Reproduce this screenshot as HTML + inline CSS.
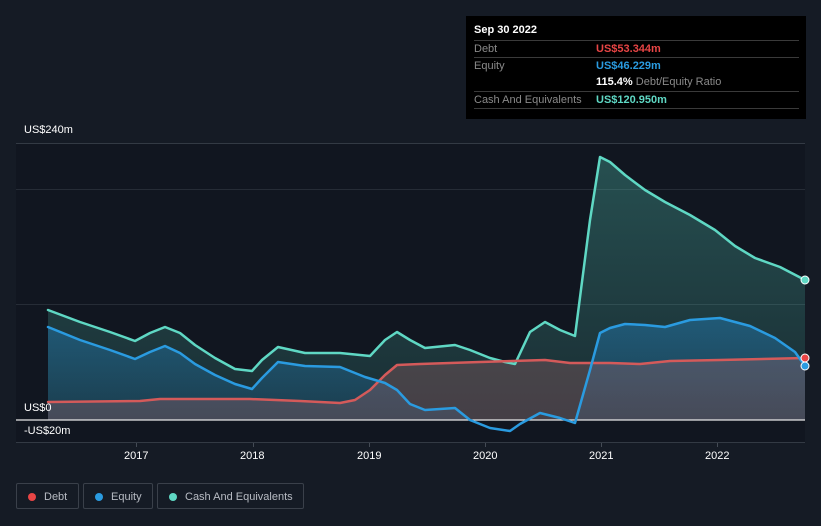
<!DOCTYPE html>
<html><head><meta charset="utf-8"><style>
body{margin:0;width:821px;height:526px;background:#151b25;font-family:"Liberation Sans",sans-serif;overflow:hidden;position:relative}
.t{position:absolute;font-size:11px;color:#fff}
.tip{position:absolute;left:466px;top:16px;width:340px;height:103px;background:#000}
.tip .row{position:absolute;left:8px;width:325px;border-top:1px solid #3a3a3a;height:17px;font-size:11px;color:#8a8a8a}
.leg{position:absolute;top:483px;height:26px;border:1px solid #3a404a;border-radius:2px;font-size:11px;color:#b8bcc4;line-height:26px;box-sizing:border-box}
.dot{display:inline-block;width:8px;height:8px;border-radius:50%;margin:0 8px 0 11px;vertical-align:-0.5px}
</style></head><body>
<svg width="821" height="526" style="position:absolute;left:0;top:0">
<defs>
<linearGradient id="gc" x1="0" y1="0" x2="0" y2="1"><stop offset="0" stop-color="#58d6c2" stop-opacity="0.3"/><stop offset="1" stop-color="#58d6c2" stop-opacity="0.12"/></linearGradient>
<linearGradient id="ge" x1="0" y1="0" x2="0" y2="1"><stop offset="0" stop-color="#2394df" stop-opacity="0.35"/><stop offset="1" stop-color="#2394df" stop-opacity="0.15"/></linearGradient>
</defs>
<rect x="16" y="143" width="789" height="300" fill="#111620"/>
<line x1="16" y1="143.5" x2="805" y2="143.5" stroke="#333a44"/>
<line x1="16" y1="189.5" x2="805" y2="189.5" stroke="#262c36"/>
<line x1="16" y1="304.5" x2="805" y2="304.5" stroke="#262c36"/>
<line x1="16" y1="442.5" x2="805" y2="442.5" stroke="#333a44"/>
<g stroke="#444b55"><line x1="136.5" y1="443" x2="136.5" y2="447"/><line x1="253.5" y1="443" x2="253.5" y2="447"/><line x1="369.5" y1="443" x2="369.5" y2="447"/><line x1="485.5" y1="443" x2="485.5" y2="447"/><line x1="601.5" y1="443" x2="601.5" y2="447"/><line x1="717.5" y1="443" x2="717.5" y2="447"/></g>
<path fill="url(#gc)" d="M48,310 L80,322 110,332 135,341 150,333 165,327 180,333 195,345 215,358 235,369 252,371 262,360 278,347 305,353 340,353 370,356 385,340 397,332 410,340 425,348 455,345 470,350 490,358 505,362 515,364 530,332 545,322 560,330 575,336 590,220 600,157 610,162 625,175 645,190 665,202 690,215 715,230 735,246 755,258 780,267 805,280 L805,420 L48,420Z"/>
<path fill="url(#ge)" d="M48,327 L80,340 110,350 135,359 150,352 165,346 180,353 195,364 215,375 235,384 252,389 262,378 278,362 305,366 340,367 365,377 385,383 397,390 410,404 425,410 455,408 470,420 L575,420 590,370 600,333 610,328 625,324 645,325 665,327 690,320 720,318 750,326 775,338 795,352 805,366 L805,420 L48,420Z"/>
<path fill="#c94a4a" fill-opacity="0.2" d="M48,402 L140,401 160,399 250,399 300,401 340,403 355,400 370,390 385,375 397,365 420,364 480,362 545,360 570,363 610,363 640,364 670,361 720,360 805,358 L805,420 L48,420Z"/>
<path fill="#8a9ab0" fill-opacity="0.12" d="M48,402 L140,401 160,399 250,399 300,401 340,403 355,400 370,390 385,375 397,365 420,364 480,362 545,360 570,363 610,363 640,364 670,361 720,360 805,358 L805,420 L48,420Z"/>
<line x1="16" y1="420" x2="805" y2="420" stroke="#e8e8e8" stroke-width="1.2"/>
<g fill="none" stroke-width="2.5" stroke-linejoin="round" stroke-linecap="round">
<path stroke="#5fd8c4" d="M48,310 L80,322 110,332 135,341 150,333 165,327 180,333 195,345 215,358 235,369 252,371 262,360 278,347 305,353 340,353 370,356 385,340 397,332 410,340 425,348 455,345 470,350 490,358 505,362 515,364 530,332 545,322 560,330 575,336 590,220 600,157 610,162 625,175 645,190 665,202 690,215 715,230 735,246 755,258 780,267 805,280"/>
<path stroke="#d45a5a" d="M48,402 L140,401 160,399 250,399 300,401 340,403 355,400 370,390 385,375 397,365 420,364 480,362 545,360 570,363 610,363 640,364 670,361 720,360 805,358"/>
<path stroke="#2a9be0" d="M48,327 L80,340 110,350 135,359 150,352 165,346 180,353 195,364 215,375 235,384 252,389 262,378 278,362 305,366 340,367 365,377 385,383 397,390 410,404 425,410 455,408 470,420 490,428 510,431 520,424 540,413 560,418 575,423 590,370 600,333 610,328 625,324 645,325 665,327 690,320 720,318 750,326 775,338 795,352 805,366"/>
</g>
<circle cx="805" cy="280" r="4" fill="#5fd8c4" stroke="#fff" stroke-width="1"/>
<circle cx="805" cy="358" r="4" fill="#e84545" stroke="#fff" stroke-width="1"/>
<circle cx="805" cy="366" r="4" fill="#2a9be0" stroke="#fff" stroke-width="1"/>
</svg>
<div class="t" style="left:24px;top:124px">US$240m</div>
<div class="t" style="left:24px;top:402px">US$0</div>
<div class="t" style="left:24px;top:425px">-US$20m</div>
<div class="t" style="left:124px;top:450px">2017</div>
<div class="t" style="left:240px;top:450px">2018</div>
<div class="t" style="left:357px;top:450px">2019</div>
<div class="t" style="left:473px;top:450px">2020</div>
<div class="t" style="left:589px;top:450px">2021</div>
<div class="t" style="left:705px;top:450px">2022</div>
<div class="tip">
<div style="position:absolute;left:8px;top:8px;font-size:11px;color:#fff;font-weight:bold">Sep 30 2022</div>
<div class="row" style="top:24px"><span style="position:absolute;top:2px">Debt</span><span style="position:absolute;left:122px;top:2px;color:#e84545;font-weight:bold">US$53.344m</span></div>
<div class="row" style="top:41px"><span style="position:absolute;top:2px">Equity</span><span style="position:absolute;left:122px;top:2px;color:#2a9be0;font-weight:bold">US$46.229m</span></div>
<div class="row" style="top:58px;border-top:none"><span style="position:absolute;left:122px;top:2px"><b style="color:#fff">115.4%</b> Debt/Equity Ratio</span></div>
<div class="row" style="top:75px"><span style="position:absolute;top:2px">Cash And Equivalents</span><span style="position:absolute;left:122px;top:2px;color:#5fd8c4;font-weight:bold">US$120.950m</span></div>
<div class="row" style="top:92px;height:0"></div>
</div>
<div class="leg" style="left:16px;width:63px"><span class="dot" style="background:#e84545"></span>Debt</div>
<div class="leg" style="left:83px;width:70px"><span class="dot" style="background:#2a9be0"></span>Equity</div>
<div class="leg" style="left:157px;width:147px"><span class="dot" style="background:#5fd8c4"></span>Cash And Equivalents</div>
</body></html>
